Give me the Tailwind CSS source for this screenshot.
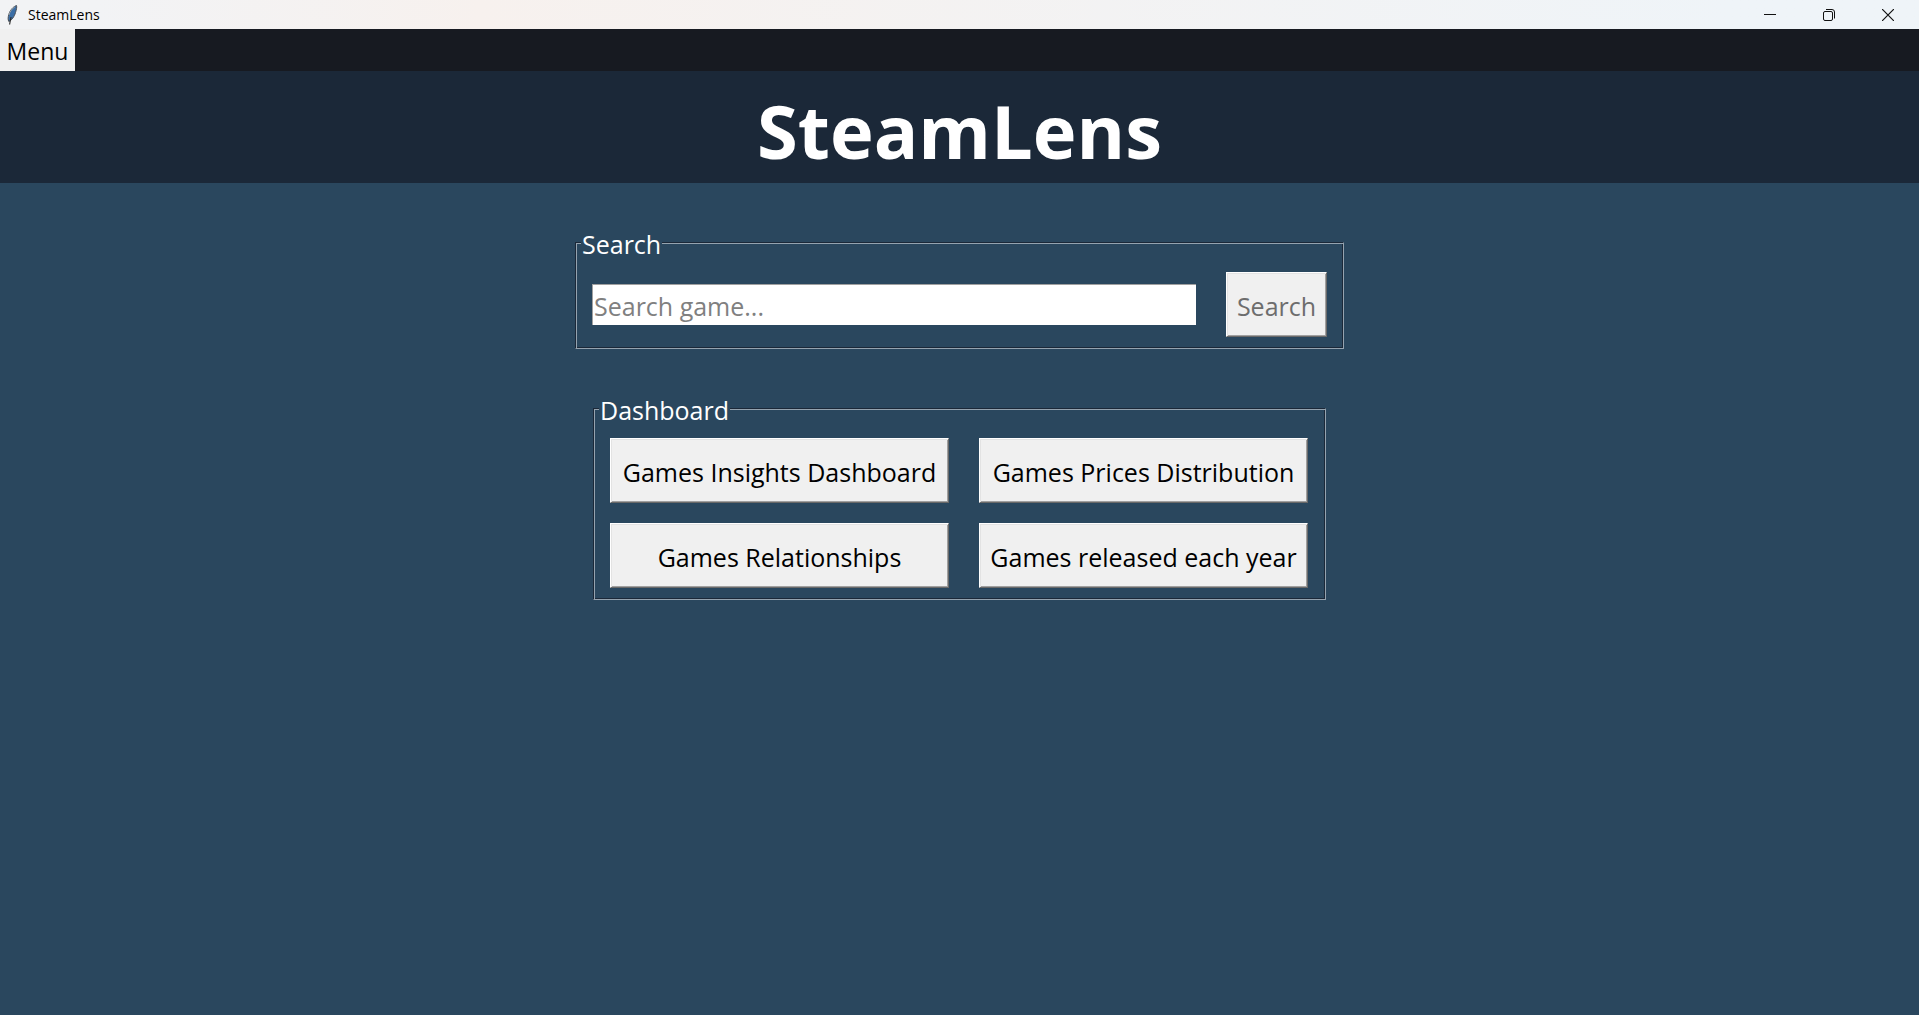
<!DOCTYPE html>
<html lang="en">
<head>
<meta charset="utf-8">
<title>SteamLens</title>
<script src="https://cdn.jsdelivr.net/npm/@tailwindcss/browser@4"></script>
</head>
<body class="flex min-h-screen flex-col bg-[#2a475e] font-['Open_Sans','Noto_Sans',sans-serif] text-[25px] text-black">
  <div class="flex h-[29px] items-center justify-between bg-linear-to-r from-[#f2f3f5] from-5% via-[#f7f1ee] via-25% to-[#eff4f8] to-90%">
    <div class="flex items-center gap-2 pl-1.5">
      <svg class="h-5 w-3.5" viewBox="0 0 14 20" aria-hidden="true">
        <path d="M10.500 0.500C7.500 1.500 4 5 2.800 9.500C2 12.500 1.800 14.500 2.800 16.500C5.500 15.500 8.500 11.500 9.500 7.500C10.500 4.500 11 2 10.500 0.500Z" fill="#3b6ea5" stroke="#4a4f57" stroke-width="1"/>
        <path d="M3 10C3.800 6.500 6.500 3 9 1.700" fill="none" stroke="#9aa0a6" stroke-width="1"/>
        <path d="M5 12L3.600 19.500" fill="none" stroke="#2b2b2b" stroke-width="1.200"/>
      </svg>
      <span class="text-sm">SteamLens</span>
    </div>
    <div class="flex h-full gap-3 pr-2">
      <button aria-label="Minimize" class="flex w-[47px] items-center justify-center"><svg class="size-3" viewBox="0 0 12 12"><path d="M0 5.500H12" stroke="#111" fill="none"/></svg></button>
      <button aria-label="Restore" class="flex w-[47px] items-center justify-center"><svg class="size-3" viewBox="0 0 12 12" fill="none" stroke="#111"><rect x=".5" y="2.500" width="9" height="9" rx="1.500"/><path d="M3 .5H9A2.500 2.500 0 0 1 11.500 3V9.500"/></svg></button>
      <button aria-label="Close" class="flex w-[47px] items-center justify-center"><svg class="size-3" viewBox="0 0 12 12"><path d="M0 0L12 12M12 0L0 12" stroke="#111" stroke-width="1.200" fill="none"/></svg></button>
    </div>
  </div>
  <nav class="flex h-[42px] bg-[#171a21]">
    <button class="w-[75px] bg-[#f0f0f0] pt-0.5 text-[23px]">Menu</button>
  </nav>
  <header class="h-28 bg-[#1b2838] pt-1 text-center">
    <h1 class="text-[74px] leading-[112px] font-bold text-white">SteamLens</h1>
  </header>
  <main class="flex flex-col items-center pt-[41px]">
    <fieldset class="border border-t-[#1b2838] border-r-[#95a3af] border-b-[#95a3af] border-l-[#1b2838] pr-4 pb-[11px] pl-4 shadow-[inset_1px_1px_#95a3af,inset_-1px_-1px_#1b2838]">
      <legend class="-ml-[11px] bg-[#2a475e] px-px pt-1 leading-8 text-white"><label for="q">Search</label></legend>
      <div class="mt-3 flex items-center gap-[30px]">
        <input id="q" type="text" placeholder="Search game..." class="h-[41px] w-[604px] border-t border-l border-[#a0a0a0] bg-white px-px pt-0.5 placeholder:text-[#808080]">
        <button disabled class="h-[65px] w-[101px] border border-t-white border-r-[#696969] border-b-[#696969] border-l-white bg-[#f0f0f0] pt-1 text-[#6d6d6d] shadow-[inset_1px_1px_#e3e3e3,inset_-1px_-1px_#a0a0a0]">Search</button>
      </div>
    </fieldset>
    <fieldset class="mt-[41px] border border-t-[#1b2838] border-r-[#95a3af] border-b-[#95a3af] border-l-[#1b2838] pr-[17px] pb-[11px] pl-4 shadow-[inset_1px_1px_#95a3af,inset_-1px_-1px_#1b2838]">
      <legend class="-ml-[11px] bg-[#2a475e] px-px pt-1 leading-8 text-white">Dashboard</legend>
      <div class="mt-3 grid grid-cols-[339px_329px] gap-x-[30px] gap-y-5">
        <button class="h-[65px] border border-t-white border-r-[#696969] border-b-[#696969] border-l-white bg-[#f0f0f0] pt-1 whitespace-nowrap shadow-[inset_1px_1px_#e3e3e3,inset_-1px_-1px_#a0a0a0]">Games Insights Dashboard</button>
        <button class="h-[65px] border border-t-white border-r-[#696969] border-b-[#696969] border-l-white bg-[#f0f0f0] pt-1 whitespace-nowrap shadow-[inset_1px_1px_#e3e3e3,inset_-1px_-1px_#a0a0a0]">Games Prices Distribution</button>
        <button class="h-[65px] border border-t-white border-r-[#696969] border-b-[#696969] border-l-white bg-[#f0f0f0] pt-1 whitespace-nowrap shadow-[inset_1px_1px_#e3e3e3,inset_-1px_-1px_#a0a0a0]">Games Relationships</button>
        <button class="h-[65px] border border-t-white border-r-[#696969] border-b-[#696969] border-l-white bg-[#f0f0f0] pt-1 whitespace-nowrap shadow-[inset_1px_1px_#e3e3e3,inset_-1px_-1px_#a0a0a0]">Games released each year</button>
      </div>
    </fieldset>
  </main>
</body>
</html>
